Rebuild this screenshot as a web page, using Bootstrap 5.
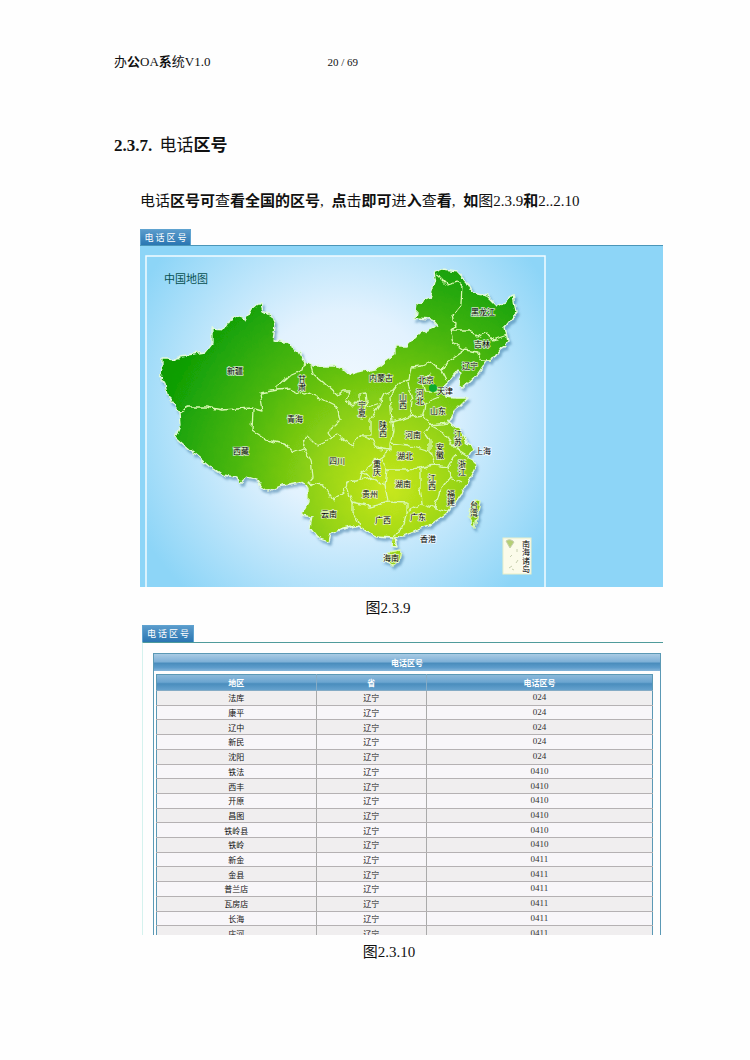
<!DOCTYPE html>
<html lang="zh-CN">
<head>
<meta charset="utf-8">
<meta name="viewport" content="width=device-width, initial-scale=1">
<title>办公OA系统V1.0</title>
<link href="https://cdn.jsdelivr.net/npm/bootstrap@5.3.0/dist/css/bootstrap.min.css" rel="stylesheet">
<style>
  body { font-family: "Liberation Serif", "Noto Sans CJK SC", serif; color: #111; background: #fefefe; }
  .sheet { padding: 52px 87px 48px 114px; }
  .page-head { font-size: 13px; line-height: 20px; gap: 117px; }
  .page-no { font-size: 11px; }
  .section-title { font-size: 17px; line-height: 24px; margin: 62px 0 0; font-weight: 400; }
  .section-no { margin-right: 3px; }
  .intro { font-size: 15px; line-height: 24px; margin: 31px 0 0 26px; white-space: nowrap; }
  .pause { margin-right: 4px; }
  .shot { margin: 16px 0 0 26px; }
  .shot + .shot { margin: 6px 0 0 28px; }
  .tab-btn { width: 51px; height: 16px; padding: 0; border: 1px solid #5fa3d0; border-bottom: 0; border-radius: 0; display: block;
    background: linear-gradient(#5a9bcb, #2a76b2); color: #fff;
    font: 9px/14px "Noto Sans CJK SC", sans-serif; }
  .map-pane { background: #8dd5f7; border-top: 1px solid #4b96b8; }
  .map-pane svg { display: block; width: 100%; height: auto; }
  .map-pane text { font: 8px "Noto Sans CJK SC", sans-serif; fill: #000; stroke: #fff; stroke-opacity: .75; stroke-width: 1.5px; paint-order: stroke; text-anchor: middle; }
  .map-pane text.map-name { font-size: 11px; fill: #075050; stroke: none; text-anchor: start; }
  .caption-line { font-size: 15px; line-height: 22px; text-align: center; }
  .shot .map-caption { margin: 10px 27px 0 0; }
  .shot .list-caption { margin: 6px 27px 0 0; }
  .list-clip { height: 310px; overflow: hidden; }
  .list-clip .tab-btn { width: 52px; height: 17px; line-height: 16px; }
  .list-pane { border-top: 1px solid #4f9b9b; border-left: 1px solid #d5f2ee; padding: 10px 2px 0 10px; }
  .list-frame { border: 1px solid #5b99b5; padding: 0 7px 0 2px; }
  .blue-bar { background: linear-gradient(#a9cbe4 0, #7fb1d7 45%, #4a8dbd 55%, #5d9ccb 80%, #85b5da); color: #fff; font: bold 8px/17px "Noto Sans CJK SC", sans-serif; text-align: center; }
  .list-title { height: 17px; margin: 0 -7px 3px -2px; }
  .codes { width: 100%; height: 267px; table-layout: fixed; border: 1px solid #5b99b5; font: 8px/11px "Noto Sans CJK SC", sans-serif; text-align: center; }
  .codes th, .codes td { padding: 0; border-left: 1px solid #aaa; border-bottom: 1px solid #b5b1b3; }
  .codes th { border-color: #85abc5; height: 16px; }
  .codes th:first-child, .codes td:first-child { border-left: 0; }
  .codes th.blue-bar { background: none; line-height: 14px; }
  .codes thead { background: linear-gradient(#8bb9da, #6ba5d0 45%, #4a8dbd 55%, #69a5d0); }
  .codes tbody tr:nth-child(odd) { background: #f0eeef; }
  .codes tbody tr:nth-child(even) { background: #f8f6f9; }
  .codes td:last-child { font-family: "Liberation Serif", serif; font-size: 9px; color: #333; }
  .col-area { width: 32.2%; }
  .col-prov { width: 22.2%; }
</style>
</head>
<body>
<main class="sheet">
  <header class="page-head d-flex align-items-center">
    <div>办<b>公</b>OA<b>系</b>统V1.0</div>
    <div class="page-no">20 / 69</div>
  </header>

  <h1 class="section-title"><b class="section-no">2.3.7.</b> 电话<b>区号</b></h1>
  <p class="intro">电话<b>区号可</b>查<b>看全国的区号</b><span class="pause">, </span><b>点</b>击<b>即可</b>进<b>入</b>查<b>看</b><span class="pause">, </span><b>如</b>图2.3.9<b>和</b>2..2.10</p>

  <section class="shot">
    <button class="tab-btn" type="button">电 话 区 号</button>
    <div class="map-pane">
      <svg viewBox="140 246 523 341" role="img" aria-label="中国地图">
        <defs>
          <radialGradient id="sky" gradientUnits="userSpaceOnUse" cx="0" cy="0" r="1" gradientTransform="translate(345 410) scale(235 245)">
            <stop offset="0" stop-color="#f4faff"/><stop offset=".4" stop-color="#e2f2fe"/><stop offset="1" stop-color="#8dd5f7"/>
          </radialGradient>
          <radialGradient id="land" gradientUnits="userSpaceOnUse" cx="390" cy="488" r="245">
            <stop offset="0" stop-color="#c8e81c"/><stop offset=".3" stop-color="#94d314"/><stop offset=".65" stop-color="#48b60c"/><stop offset="1" stop-color="#0b9d05"/>
          </radialGradient>
          <filter id="coast" x="-5%" y="-5%" width="110%" height="110%">
            <feTurbulence type="fractalNoise" baseFrequency=".13" numOctaves="2" seed="4" result="n"/>
            <feDisplacementMap in="SourceGraphic" in2="n" scale="6" xChannelSelector="R" yChannelSelector="G" result="d"/>
            <feDropShadow in="d" dx="2" dy="3" stdDeviation="1" flood-color="#2e6f9c" flood-opacity=".5"/>
          </filter>
        </defs>
        <rect x="146" y="256" width="399" height="340" fill="url(#sky)" stroke="#f2fbff" stroke-width="1.5"/>
        <g filter="url(#coast)" stroke="#d9f8b4" stroke-width="1.3" stroke-linejoin="round">
          <path fill="url(#land)" stroke="#e3fbdc" d="M162 358L168 358 177 359 180 356 205 352 212 343 212 328 225 329 233 316 245 320 250 310 257 304 261 304 263 311 272 316 275 327 273 340 285 342 298 350 305 362 312 366 335 366 353 374 378 368 385 362 395 355 395 346 407 346 420 333 438 325 433 319 415 318 417 304 430 298 435 282 433 273 443 269 457 271 467 282 473 293 487 296 497 306 506 302 513 294 516 313 505 327 508 342 503 347 495 358 487 360 477 375 462 388 458 385 460 373 457 371 448 382 443 388 445 397 455 398 468 398 453 413 448 422 460 430 465 440 473 448 468 457 474 460 475 468 467 485 455 503 447 513 430 525 407 533 395 538 397 547 392 546 393 538 377 537 367 532 358 525 340 530 331 533 329 541 317 537 310 528 312 517 301 515 308 502 308 487 300 482 283 485 268 491 262 487 257 480 247 477 240 483 237 477 222 475 210 467 192 452 175 437 180 425 179 412 167 395 165 383 160 380 162 368Z"/>
          <path fill="url(#land)" d="M477 500L480 501 478 513 475 528 469 517 472 503ZM388 552L402 550 400 560 392 566 383 560Z"/>
          <g fill="none">
            <path d="M179 412L188 407 207 407 222 410 252 408 263 411 260 393 278 390 278 385 287 377 303 370 305 362"/>
            <path d="M278 390L290 389 303 395 310 393 327 402 337 407 340 420 328 432 332 438 317 445 307 435 303 448 293 452 287 445 267 440 252 430 253 410"/>
            <path d="M303 448L311 460 313 477 308 483 323 485 333 500 343 492 348 482 360 480 362 472 380 458 390 450 377 448 372 440 360 435 353 446 337 435 332 438"/>
            <path d="M310 366L312 373 323 382 337 395 343 391 350 391 346 400 353 406 359 400 359 394 366 393 367 401 364 408 362 420M365 407L380 402 384 394 393 390 400 382 410 380 412 368 420 367 430 362 437 368 442 370 448 362 465 350 453 342 450 330 455 325 453 315 461 305 462 285 457 282 448 285 440 277 435 275"/>
            <path d="M450 330L470 330 477 337 487 333 493 340 507 335M465 350L477 352 482 360 490 360M442 370L447 380"/>
            <path d="M400 382L390 397 392 422 410 417 412 400 408 382M410 417L423 415 425 403 440 397M423 415L430 425 448 423"/>
            <path d="M392 422L393 430 390 445 390 450M360 435L370 435 370 420 380 403M390 443L407 445 430 452 430 440 425 433 430 425 443 432 457 450 468 457"/>
            <path d="M430 452L435 465 420 468 407 470 387 470 380 458M435 465L448 467 455 455M448 467L450 477 462 483M450 477L440 490 435 508 447 512"/>
            <path d="M420 468L420 487 422 503 435 508M422 503L407 512 403 527 393 537M387 470L385 485 388 502 407 503 407 512"/>
            <path d="M360 480L373 478 385 485M373 478L362 472M348 482L347 487 353 503 370 507 388 502M353 503L353 513 360 524M430 372L421 380 425 392 438 392"/>
          </g>
        </g>
        <circle cx="433" cy="388" r="4" fill="#0cab2e"/>
        <rect x="503" y="538" width="28" height="36" fill="#fbfbea" stroke="#e9efc9"/>
        <path d="M506 541q4-3 8 1l-4 6zM509 568l3-2m4-3l2-3m-8-3l2-2m5-3v-3m-5 20l2 1" fill="#b5cf75" stroke="#c7cfae"/>
        <text class="map-name" x="164" y="283">中国地图</text>
        <g>
          <text x="235" y="374">新疆</text><text x="241" y="454">西藏</text><text x="295" y="422">青海</text>
          <text x="302" y="382">甘<tspan x="302" y="390">肃</tspan></text>
          <text x="381" y="381">内蒙古</text><text x="483" y="315">黑龙江</text><text x="482" y="347">吉林</text><text x="470" y="369">辽宁</text>
          <text x="426" y="383">北京</text><text x="445" y="394">天津</text>
          <text x="420" y="396">河<tspan x="420" y="404">北</tspan></text>
          <text x="403" y="400">山<tspan x="403" y="408">西</tspan></text>
          <text x="362" y="408">宁<tspan x="362" y="416">夏</tspan></text>
          <text x="383" y="428">陕<tspan x="383" y="436">西</tspan></text>
          <text x="438" y="414">山东</text><text x="413" y="438">河南</text>
          <text x="458" y="437">江<tspan x="458" y="445">苏</tspan></text>
          <text x="440" y="450">安<tspan x="440" y="458">徽</tspan></text>
          <text x="483" y="454">上海</text><text x="405" y="459">湖北</text><text x="337" y="464">四川</text>
          <text x="462" y="467">浙<tspan x="462" y="475">江</tspan></text>
          <text x="377" y="467">重<tspan x="377" y="475">庆</tspan></text>
          <text x="432" y="481">江<tspan x="432" y="489">西</tspan></text>
          <text x="403" y="487">湖南</text><text x="370" y="497">贵州</text>
          <text x="451" y="497">福<tspan x="451" y="505">建</tspan></text>
          <text x="474" y="508">台<tspan x="474" y="516">湾</tspan></text>
          <text x="329" y="517">云南</text><text x="383" y="523">广西</text><text x="418" y="520">广东</text>
          <text x="428" y="542">香港</text><text x="391" y="561">海南</text>
          <text x="526" y="547">南<tspan x="526" y="555">海</tspan><tspan x="526" y="564">诸</tspan><tspan x="526" y="572">岛</tspan></text>
        </g>
      </svg>
    </div>
    <div class="caption-line map-caption">图2.3.9</div>
  </section>

  <section class="shot">
    <div class="list-clip">
      <button class="tab-btn" type="button">电 话 区 号</button>
      <div class="list-pane">
        <div class="list-frame">
          <div class="blue-bar list-title">电话区号</div>
          <table class="codes">
            <colgroup><col class="col-area"><col class="col-prov"><col></colgroup>
            <thead><tr><th class="blue-bar" scope="col">地区</th><th class="blue-bar" scope="col">省</th><th class="blue-bar" scope="col">电话区号</th></tr></thead>
            <tbody>
              <tr><td>法库</td><td>辽宁</td><td>024</td></tr>
              <tr><td>康平</td><td>辽宁</td><td>024</td></tr>
              <tr><td>辽中</td><td>辽宁</td><td>024</td></tr>
              <tr><td>新民</td><td>辽宁</td><td>024</td></tr>
              <tr><td>沈阳</td><td>辽宁</td><td>024</td></tr>
              <tr><td>铁法</td><td>辽宁</td><td>0410</td></tr>
              <tr><td>西丰</td><td>辽宁</td><td>0410</td></tr>
              <tr><td>开原</td><td>辽宁</td><td>0410</td></tr>
              <tr><td>昌图</td><td>辽宁</td><td>0410</td></tr>
              <tr><td>铁岭县</td><td>辽宁</td><td>0410</td></tr>
              <tr><td>铁岭</td><td>辽宁</td><td>0410</td></tr>
              <tr><td>新金</td><td>辽宁</td><td>0411</td></tr>
              <tr><td>金县</td><td>辽宁</td><td>0411</td></tr>
              <tr><td>普兰店</td><td>辽宁</td><td>0411</td></tr>
              <tr><td>瓦房店</td><td>辽宁</td><td>0411</td></tr>
              <tr><td>长海</td><td>辽宁</td><td>0411</td></tr>
              <tr><td>庄河</td><td>辽宁</td><td>0411</td></tr>
            </tbody>
          </table>
        </div>
      </div>
    </div>
    <div class="caption-line list-caption">图2.3.10</div>
  </section>
</main>
<script src="https://cdn.jsdelivr.net/npm/bootstrap@5.3.0/dist/js/bootstrap.bundle.min.js"></script>
</body>
</html>
